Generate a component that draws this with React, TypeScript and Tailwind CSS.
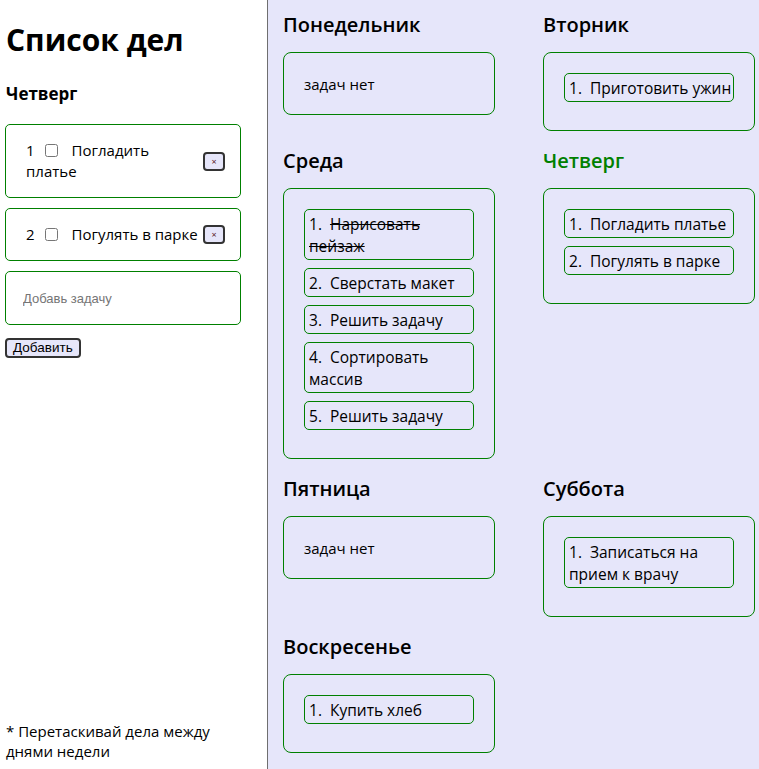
import React from "react"

type Task = { text: string; done?: boolean }

const week: { name: string; tasks: Task[]; today?: boolean }[] = [
  { name: "Понедельник", tasks: [] },
  { name: "Вторник", tasks: [{ text: "Приготовить ужин" }] },
  {
    name: "Среда",
    tasks: [
      { text: "Нарисовать пейзаж", done: true },
      { text: "Сверстать макет" },
      { text: "Решить задачу" },
      { text: "Сортировать массив" },
      { text: "Решить задачу" },
    ],
  },
  {
    name: "Четверг",
    today: true,
    tasks: [{ text: "Погладить платье" }, { text: "Погулять в парке" }],
  },
  { name: "Пятница", tasks: [] },
  { name: "Суббота", tasks: [{ text: "Записаться на прием к врачу" }] },
  { name: "Воскресенье", tasks: [{ text: "Купить хлеб" }] },
]

const todayTasks = ["Погладить платье", "Погулять в парке"]

function DayCard({ name, tasks, today }: { name: string; tasks: Task[]; today?: boolean }) {
  return (
    <div className="flex flex-col">
      <h3
        className={`h-7 leading-7 text-[20px] font-semibold mb-[13px] ${
          today ? "text-[#008000]" : "text-black"
        }`}
      >
        {name}
      </h3>
      <div className="border border-[#008000] rounded-[8px] px-5 pt-5 pb-5">
        {tasks.length === 0 ? (
          <p className="text-[15px] leading-5 pt-px">задач нет</p>
        ) : (
          <ol>
            {tasks.map((t, i) => (
              <li
                key={i}
                className="border border-[#008000] rounded-[5px] pl-1 pr-0 py-[2.5px] mb-2 text-[15.5px] leading-[22px]"
              >
                <span className="mr-[8px]">{i + 1}.</span>
                <span className={t.done ? "line-through" : ""}>{t.text}</span>
              </li>
            ))}
          </ol>
        )}
      </div>
    </div>
  )
}

export default function App() {
  return (
    <div
      className="flex w-full h-[769px] text-black overflow-hidden"
      style={{ fontFamily: '"Open Sans", "Noto Sans", sans-serif' }}
    >
      {/* left: today's list */}
      <div className="w-[268px] shrink-0 border-r border-[#6f6f6f] bg-white flex flex-col px-[5px]">
        <h1 className="text-[30px] font-bold leading-[38px] mt-[21px] ml-px">Список дел</h1>
        <h3 className="text-[17px] font-bold leading-6 mt-[23px] ml-px">Четверг</h3>

        <div className="w-[236px] mt-[18px] flex flex-col gap-[10px]">
          {todayTasks.map((t, i) => (
            <div
              key={i}
              className="flex items-center border border-[#008000] rounded-[5px] pl-5 pr-[15px] py-[15px]"
            >
              <div className="flex-1 text-[15px] leading-[21px]">
                {i + 1}
                <input type="checkbox" className="ml-[10px] mr-[14px] w-[13px] h-[13px] align-[-1px]" />
                {t}
              </div>
              <button className="shrink-0 w-[22px] h-[19px] bg-[#e6e6fa] border-2 border-[#333] rounded-[4px] text-[9px] leading-none text-[#5a1a1a]">
                ×
              </button>
            </div>
          ))}
          <input
            placeholder="Добавь задачу"
            className="h-[54px] border border-[#008000] rounded-[5px] pl-[17px] text-[13px] placeholder:text-[#757575] outline-none"
            style={{ fontFamily: '"Liberation Sans", Arial, sans-serif' }}
          />
        </div>

        <div className="flex mt-[13px]">
          <button
            className="h-[20px] px-[6px] bg-[#e6e6fa] border-2 border-[#333] rounded-[4px] text-[13.5px] leading-none"
            style={{ fontFamily: '"Liberation Sans", Arial, sans-serif' }}
          >
            Добавить
          </button>
        </div>

        <p className="mt-auto mb-[8px] ml-px max-w-[215px] text-[15px] leading-5">
          * Перетаскивай дела между днями недели
        </p>
      </div>

      {/* right: week board */}
      <div className="flex-1 bg-[#e6e6fa] pl-[15px] pt-[11px]">
        <div className="grid grid-cols-[212px_212px] gap-x-12 gap-y-4 items-start">
          {week.map((d) => (
            <DayCard key={d.name} name={d.name} tasks={d.tasks} today={d.today} />
          ))}
        </div>
      </div>
    </div>
  )
}
